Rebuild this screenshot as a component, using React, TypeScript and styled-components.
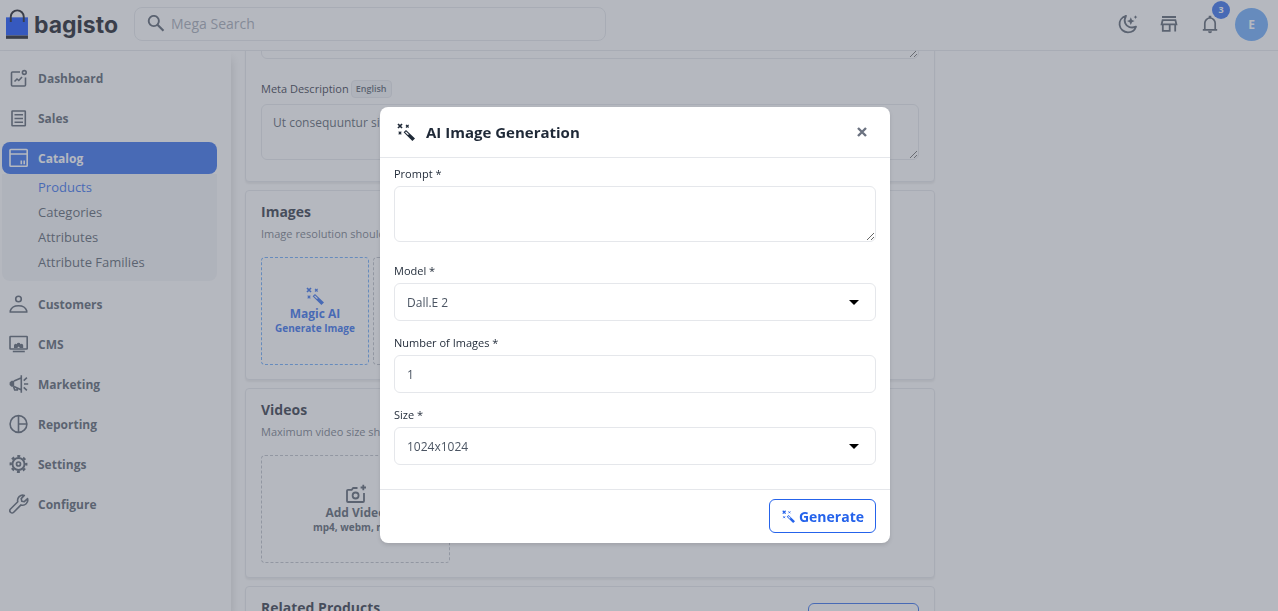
import React, { useLayoutEffect, useRef } from "react";
import styled, { createGlobalStyle } from "styled-components";

const GlobalStyle = createGlobalStyle`
  *, *::before, *::after { box-sizing: border-box; }
  body {
    margin: 0;
    background: #fff;
    color: #1f2937;
    font-family: "Open Sans", "Noto Sans", sans-serif;
    font-size: 13px;
  }
  button, input, textarea, select { font-family: inherit; }
  p, h1, h2 { margin: 0; }
  a { text-decoration: none; }
`;

/* ---------- icons ---------- */

const Svg = styled.svg<{ $size?: number }>`
  display: block;
  flex: none;
  width: ${(p) => p.$size ?? 20}px;
  height: ${(p) => p.$size ?? 20}px;
  fill: none;
  stroke: currentColor;
  stroke-width: 1.6;
`;

const MagicIcon = ({ size = 18 }: { size?: number }) => (
  <Svg $size={size} viewBox="0 0 18 18" aria-hidden="true">
    <path d="M1 1l4 4M5 1L1 5" strokeWidth="1.7" />
    <path d="M9 1.9l2.6 2.6M11.6 1.9L9 4.500M1.700 8.700l2.600 2.600M4.300 8.700L1.700 11.300" strokeWidth="1.2" />
    <path d="M9 6.900L6.600 9.300l8.800 8.700L18 15.500zM9 8.400l2.900 2.800-.9.900-2.900-2.900z" fill="currentColor" fillRule="evenodd" stroke="none" />
  </Svg>
);

const DashboardIcon = () => (
  <Svg viewBox="0 0 20 20">
    <path d="M11 4H3.500a1 1 0 0 0-1 1v12a1 1 0 0 0 1 1H15.500a1 1 0 0 0 1-1V9.500" />
    <circle cx="15.300" cy="4.500" r="1.900" />
    <path d="M5.500 13.500l2.500-2.500 1.800 1.500 3.200-3.500" />
  </Svg>
);
const SalesIcon = () => (
  <Svg viewBox="0 0 20 20">
    <rect x="3" y="3" width="13.300" height="14.800" rx=".5" />
    <path d="M5.500 6.800h8.500M5.500 10.500h8.500M5.500 14.200h8.500" />
  </Svg>
);
const CatalogIcon = () => (
  <Svg viewBox="0 0 20 20">
    <rect x="1" y="1.500" width="17.200" height="16.800" rx=".8" />
    <path d="M1 6h17.200M12.300 12.500v3.800M15.200 12.500v3.800" />
  </Svg>
);
const CustomersIcon = () => (
  <Svg viewBox="0 0 20 20">
    <circle cx="9.500" cy="5" r="2.800" />
    <path d="M1.300 18v-1.200c1-3.200 4.200-5 8.200-5s7.200 1.800 8.200 5V18z" />
  </Svg>
);
const CmsIcon = () => (
  <Svg viewBox="0 0 20 20">
    <rect x="1" y="2.500" width="17.200" height="12.500" rx=".5" />
    <path d="M3.800 17.500h12" />
    <path d="M5 14v-2.500a1.600 1.600 0 0 1 2.700-1.300 2 2 0 0 1 3.800 0A1.600 1.600 0 0 1 14.200 11.500V14h-3.200l-1.400-1.500L8.200 14z" fill="currentColor" stroke="none" />
  </Svg>
);
const MarketingIcon = () => (
  <Svg viewBox="0 0 20 20">
    <path d="M12.300 1.300v17.400M12 4L5 7M5 12.600l7 3.200" />
    <path d="M5.200 6.800v6H2.500L.6 11V8.500L2.500 6.800z" fill="currentColor" stroke="none" />
    <path d="M4.500 12.600l1.200 3.400h2.600v-2M14.700 6.700l3.200-3M15 10h4.200M14.700 13.300l3.200 3" />
  </Svg>
);
const ReportingIcon = () => (
  <Svg viewBox="0 0 20 20">
    <circle cx="9.500" cy="10" r="8.400" />
    <path d="M9.500 1.600v16.800M9.500 10h8.400" />
  </Svg>
);
const SettingsIcon = () => (
  <Svg viewBox="0 0 20 20">
    <circle cx="9.500" cy="10" r="6" strokeWidth="1.900" />
    <circle cx="9.500" cy="10" r="2" strokeWidth="1.700" />
    <circle cx="9.500" cy="10" r="7.800" strokeWidth="2.300" strokeDasharray="3 3.126" strokeDashoffset="1.500" />
  </Svg>
);
const ConfigureIcon = () => (
  <Svg viewBox="0 0 20 20">
    <path d="M15.300 1.400a5.200 5.200 0 0 0-6.500 6.400L1.500 15a2.200 2.200 0 0 0 3.200 3.200l7.300-7.300a5.200 5.200 0 0 0 6.600-6.300l-3.300 3.100-2.500-.5-.6-2.600z" strokeLinejoin="round" />
  </Svg>
);
const SearchIcon = () => (
  <Svg $size={18} viewBox="0 0 18 18">
    <circle cx="6.800" cy="6" r="5.100" strokeWidth="1.900" />
    <path d="M10.500 9.800l6 6" strokeWidth="2.200" />
  </Svg>
);
const MoonIcon = () => (
  <Svg viewBox="0 0 20 20">
    <path d="M8 1.800C3.500 3.100 1.100 7 1.600 11c.6 4.400 4.200 7.300 8.300 7.300 3.700 0 6.900-2.100 8.100-5.600-4.800 1.900-9.200.3-10.700-3.300C6.200 6.800 6.700 4.200 8 1.800z" strokeLinejoin="round" strokeWidth="1.800" />
    <path d="M12.800 3.300l1.200 2.600 2.600 1.200L14 8.300l-1.200 2.600-1.200-2.600L9 7.100l2.600-1.200zM17.500 1.200l.6 1.300 1.300.6-1.300.6-.6 1.300-.6-1.300-1.300-.6 1.300-.6z" fill="currentColor" stroke="none" />
  </Svg>
);
const StoreIcon = () => (
  <Svg viewBox="0 0 20 20" strokeWidth="1.800">
    <path d="M3 3h14M3.600 6.200h12.800l1 4.200H2.600zM3.800 10.300v6.500h6.900v-6.500M16.200 10.300v7.200" strokeWidth="1.800" />
  </Svg>
);
const BellIcon = () => (
  <Svg viewBox="0 0 20 20">
    <path d="M2.800 15.800h14.400M4.800 15.500V9.200a5.200 5.200 0 0 1 10.400 0v6.300" strokeWidth="1.700" />
    <path d="M8.700 1.800h2.600V4H8.700zM8 17.300h4a2 2 0 0 1-4 0z" fill="currentColor" stroke="none" />
  </Svg>
);
const CameraIcon = () => (
  <Svg viewBox="0 0 20 20">
    <path d="M11.500 4H7.200L5.700 5.800H2a1 1 0 0 0-1 1V17a1 1 0 0 0 1 1h15a1 1 0 0 0 1-1V9" strokeWidth="1.800" />
    <circle cx="9.600" cy="11.500" r="3" strokeWidth="1.800" />
    <path d="M17.300.8v5.400M14.600 3.500H20" strokeWidth="1.800" />
  </Svg>
);
const CloseIcon = () => (
  <Svg $size={10} viewBox="0 0 10 10">
    <path d="M1 1l8 8M9 1L1 9" strokeWidth="2.400" />
  </Svg>
);

const BagMark = styled.svg`
  display: block;
  width: 23px;
  height: 31px;
`;

/* ---------- page shell ---------- */

const Page = styled.div`
  display: flex;
  flex-direction: column;
  height: 100vh;
  overflow: hidden;
`;

const Header = styled.header`
  display: flex;
  align-items: center;
  justify-content: space-between;
  flex: none;
  height: 51px;
  padding: 0 10px 2px 6px;
  border-bottom: 1px solid #e5e7eb;
`;

const HeaderGroup = styled.div<{ $gap: number }>`
  display: flex;
  align-items: center;
  gap: ${(p) => p.$gap}px;
`;

const Logo = styled.a`
  display: flex;
  align-items: center;
  gap: 6px;
  width: 112px;
  color: #080b14;
  font: 700 23px/31px Inter, sans-serif;
`;

const LogoText = styled.span`
  padding-top: 3px;
`;

const SearchBox = styled.label`
  display: flex;
  align-items: center;
  gap: 6px;
  width: 472px;
  height: 34px;
  padding: 0 12px;
  border: 1px solid #e5e7eb;
  border-radius: 8px;
  color: #4b5563;
`;

const SearchInput = styled.input`
  flex: 1;
  min-width: 0;
  padding: 0;
  border: 0;
  outline: 0;
  background: none;
  font-size: 14px;
  line-height: 20px;
  color: #4b5563;
  &::placeholder { color: #9ca3af; opacity: 1; }
`;

const IconButton = styled.button`
  position: relative;
  display: flex;
  padding: 0;
  border: 0;
  background: none;
  color: #4b5563;
`;

const Count = styled.span`
  position: absolute;
  top: -13px;
  left: 12px;
  width: 18px;
  height: 18px;
  border-radius: 9px;
  background: #2563eb;
  color: #fff;
  font-size: 9px;
  font-weight: 700;
  line-height: 18px;
  text-align: center;
`;

const Avatar = styled.button`
  width: 33px;
  height: 33px;
  margin-left: -6px;
  padding: 0;
  border: 0;
  border-radius: 50%;
  background: #60a5fa;
  color: #fff;
  font-size: 12px;
  font-weight: 700;
`;

const Body = styled.div`
  display: flex;
  flex: 1;
  min-height: 0;
`;

const Sidebar = styled.nav`
  display: flex;
  flex-direction: column;
  gap: 7px;
  flex: none;
  width: 231px;
  padding: 11px 14px 0 2px;
  box-shadow: 0 8px 10px 0 rgba(0, 0, 0, 0.2);
`;

const NavGroup = styled.div`
  display: flex;
  flex-direction: column;
  gap: 8px;
`;

const NavItem = styled.a<{ $active?: boolean }>`
  display: flex;
  align-items: center;
  gap: 9px;
  height: 32px;
  padding-left: 7px;
  border-radius: 8px;
  background: ${(p) => (p.$active ? "#2563eb" : "none")};
  color: ${(p) => (p.$active ? "#fff" : "#4b5563")};
  font-size: 12px;
  font-weight: 700;
`;

const SubMenu = styled.div`
  display: flex;
  flex-direction: column;
  margin-top: -8px;
  padding: 1px 0 6px 36px;
  border-radius: 0 0 8px 8px;
  background: #f3f4f6;
`;

const SubLink = styled.a<{ $active?: boolean }>`
  color: ${(p) => (p.$active ? "#2563eb" : "#4b5563")};
  font-size: 13px;
  line-height: 25px;
`;

const Main = styled.main`
  flex: 1;
  min-width: 0;
  overflow-y: auto;
  scrollbar-width: none;
  padding: 11px 16px 120px 14px;
  display: grid;
  grid-template-columns: minmax(0, 1fr) 317px;
  gap: 10px;
  align-items: start;
`;

const Cards = styled.div`
  display: grid;
  gap: 8px;
`;

/* ---------- cards ---------- */

const Card = styled.section`
  padding: 11px 15px 14px;
  border: 1px solid #e5e7eb;
  border-radius: 4px;
  background: #fff;
  box-shadow: 0 2px 2px rgba(0, 0, 0, 0.08);
`;

const MetaCard = styled(Card)`
  padding-bottom: 21px;
`;

const CardHead = styled.div`
  display: flex;
  align-items: flex-start;
  justify-content: space-between;
`;

const CardTitle = styled.h2`
  font-size: 14px;
  font-weight: 700;
  line-height: 20px;
`;

const CardNote = styled.p`
  margin: 4px 0 15px;
  color: #6b7280;
  font-size: 11px;
  font-weight: 500;
  line-height: 16px;
`;

const LabelRow = styled.div`
  display: flex;
  align-items: center;
  gap: 2px;
  height: 18px;
  margin: 21px 0 6px;
`;

const Badge = styled.span`
  height: 18px;
  padding: 0 4px;
  border: 1px solid #e5e7eb;
  border-radius: 4px;
  background: #f3f4f6;
  color: #4b5563;
  font-size: 9px;
  font-weight: 600;
  line-height: 15px;
`;

const Label = styled.label`
  display: block;
  color: #1f2937;
  font-size: 11px;
  font-weight: 500;
  line-height: 16px;
`;

const TextArea = styled.textarea`
  display: block;
  width: 100%;
  height: 56px;
  padding: 8px 11px;
  border: 1px solid #e5e7eb;
  border-radius: 6px;
  outline: 0;
  background: #fff;
  color: #4b5563;
  font-size: 12px;
  line-height: 20px;
  resize: vertical;
`;

const Tiles = styled.div`
  display: flex;
  gap: 4px;
`;

const Tile = styled.button<{ $wide?: boolean; $accent?: boolean }>`
  display: flex;
  flex-direction: column;
  align-items: center;
  justify-content: center;
  width: ${(p) => (p.$wide ? 189 : 108)}px;
  height: 108px;
  padding: 0;
  border: 1px dashed ${(p) => (p.$accent ? "#60a5fa" : "#b8bcc4")};
  border-radius: 4px;
  background: none;
  color: ${(p) => (p.$accent ? "#2563eb" : "#4b5563")};
`;

const TileTitle = styled.span`
  font-size: 12px;
  font-weight: 700;
  line-height: 17px;
`;

const TileNote = styled.span`
  font-size: 10px;
  font-weight: 700;
  line-height: 13px;
`;

const OutlineButton = styled.button`
  display: flex;
  align-items: center;
  justify-content: center;
  gap: 4px;
  height: 34px;
  padding: 0 11px 0 12px;
  border: 1px solid #2563eb;
  border-radius: 6px;
  background: #fff;
  color: #2563eb;
  font-size: 14px;
  font-weight: 700;
`;

const RelatedHead = styled(CardHead)`
  & > button { margin-top: 5px; }
`;

/* ---------- dialog ---------- */

const Overlay = styled.div`
  position: fixed;
  inset: 0;
  display: flex;
  align-items: center;
  justify-content: center;
  padding: 39px 8px 0 0;
  background: rgba(107, 114, 128, 0.5);
`;

const Dialog = styled.form`
  width: 510px;
  border-radius: 8px;
  background: #fff;
  box-shadow: 0 2px 4px rgba(0, 0, 0, 0.12);
`;

const DialogHead = styled.div`
  display: flex;
  align-items: center;
  justify-content: space-between;
  height: 51px;
  padding: 0 23px 0 17px;
  border-bottom: 1px solid #e5e7eb;
`;

const DialogTitle = styled.h1`
  display: flex;
  align-items: center;
  gap: 11px;
  font-size: 15px;
  font-weight: 700;
`;

const CloseButton = styled(IconButton)`
  color: #6b7280;
`;

const DialogBody = styled.div`
  display: flex;
  flex-direction: column;
  gap: 14px;
  padding: 8px 14px 24px;
`;

const Field = styled.div<{ $tall?: boolean }>`
  display: flex;
  flex-direction: column;
  gap: 4px;
  padding-bottom: ${(p) => (p.$tall ? 7 : 0)}px;
`;

const TextInput = styled.input`
  width: 100%;
  height: 38px;
  padding: 0 12px;
  border: 1px solid #e5e7eb;
  border-radius: 6px;
  outline: 0;
  background: #fff;
  color: #4b5563;
  font-size: 12px;
`;

const SelectWrap = styled.div`
  display: grid;
  align-items: center;
  & > * { grid-area: 1 / 1; }
  & > svg { justify-self: end; margin-right: 17px; pointer-events: none; }
`;

const Select = styled(TextInput).attrs({ as: "select" })`
  appearance: none;
`;

const Caret = styled.svg`
  width: 10px;
  height: 5px;
  fill: #000;
`;

const DialogFoot = styled.div`
  display: flex;
  justify-content: flex-end;
  padding: 9px 14px 10px;
  border-top: 1px solid #e5e7eb;
`;

const topNav = [
  { label: "Dashboard", Icon: DashboardIcon },
  { label: "Sales", Icon: SalesIcon },
  { label: "Catalog", Icon: CatalogIcon, active: true },
];
const subNav = ["Products", "Categories", "Attributes", "Attribute Families"];
const bottomNav = [
  { label: "Customers", Icon: CustomersIcon },
  { label: "CMS", Icon: CmsIcon },
  { label: "Marketing", Icon: MarketingIcon },
  { label: "Reporting", Icon: ReportingIcon },
  { label: "Settings", Icon: SettingsIcon },
  { label: "Configure", Icon: ConfigureIcon },
];

const SelectField = ({ id, label, value }: { id: string; label: string; value: string }) => (
  <Field>
    <Label htmlFor={id}>{label}</Label>
    <SelectWrap>
      <Select id={id}>
        <option>{value}</option>
      </Select>
      <Caret viewBox="0 0 10 5"><path d="M0 0h10L5 5z" /></Caret>
    </SelectWrap>
  </Field>
);

export default function App() {
  const mainRef = useRef<HTMLElement>(null);

  // Open the page scrolled down to the meta description.
  useLayoutEffect(() => {
    if (mainRef.current) mainRef.current.scrollTop = 71;
  }, []);

  return (
    <>
      <GlobalStyle />
      <Page>
        <Header>
          <HeaderGroup $gap={16}>
            <Logo href="#">
              <BagMark viewBox="0 0 23 31">
                <path d="M0 8h23v19H0z" fill="#0041ff" />
                <path d="M0 27h23v3.500H0z" fill="#080b14" />
                <path d="M5 13V7.500a6.800 6.800 0 0 1 13.600 0V13" fill="none" stroke="#080b14" strokeWidth="2" />
              </BagMark>
              <LogoText>bagisto</LogoText>
            </Logo>
            <SearchBox>
              <SearchIcon />
              <SearchInput type="text" placeholder="Mega Search" aria-label="Mega Search" />
            </SearchBox>
          </HeaderGroup>
          <HeaderGroup $gap={21}>
            <IconButton aria-label="Dark mode"><MoonIcon /></IconButton>
            <IconButton aria-label="Visit shop"><StoreIcon /></IconButton>
            <IconButton aria-label="Notifications"><BellIcon /><Count>3</Count></IconButton>
            <Avatar>E</Avatar>
          </HeaderGroup>
        </Header>

        <Body>
          <Sidebar>
            <NavGroup>
              {topNav.map(({ label, Icon, active }) => (
                <NavItem key={label} href="#" $active={active}><Icon />{label}</NavItem>
              ))}
              <SubMenu>
                {subNav.map((label, i) => (
                  <SubLink key={label} href="#" $active={i === 0}>{label}</SubLink>
                ))}
              </SubMenu>
            </NavGroup>
            <NavGroup>
              {bottomNav.map(({ label, Icon }) => (
                <NavItem key={label} href="#"><Icon />{label}</NavItem>
              ))}
            </NavGroup>
          </Sidebar>

          <Main ref={mainRef}>
            <Cards>
              <MetaCard>
                <TextArea aria-label="Meta Keywords" />
                <LabelRow>
                  <Label htmlFor="description">Meta Description</Label><Badge>English</Badge>
                </LabelRow>
                <TextArea id="description" defaultValue="Ut consequuntur sit" />
              </MetaCard>

              <Card>
                <CardHead><CardTitle>Images</CardTitle></CardHead>
                <CardNote>Image resolution should be like 560px X 609px</CardNote>
                <Tiles>
                  <Tile $accent type="button">
                    <MagicIcon />
                    <TileTitle>Magic AI</TileTitle>
                    <TileNote>Generate Image</TileNote>
                  </Tile>
                  <Tile type="button">
                    <CameraIcon />
                    <TileTitle>Add Image</TileTitle>
                    <TileNote>png, jpeg, jpg</TileNote>
                  </Tile>
                </Tiles>
              </Card>

              <Card>
                <CardHead><CardTitle>Videos</CardTitle></CardHead>
                <CardNote>Maximum video size should be like 2M</CardNote>
                <Tiles>
                  <Tile $wide type="button">
                    <CameraIcon />
                    <TileTitle>Add Video</TileTitle>
                    <TileNote>mp4, webm, mkv</TileNote>
                  </Tile>
                </Tiles>
              </Card>

              <Card>
                <RelatedHead>
                  <CardTitle>Related Products</CardTitle>
                  <OutlineButton type="button">Add Product</OutlineButton>
                </RelatedHead>
              </Card>
            </Cards>
          </Main>
        </Body>
      </Page>

      <Overlay>
        <Dialog role="dialog" aria-modal="true" aria-labelledby="dialog-title" onSubmit={(e: React.FormEvent) => e.preventDefault()}>
          <DialogHead>
            <DialogTitle id="dialog-title"><MagicIcon />AI Image Generation</DialogTitle>
            <CloseButton type="button" aria-label="Close"><CloseIcon /></CloseButton>
          </DialogHead>
          <DialogBody>
            <Field $tall>
              <Label htmlFor="prompt">Prompt *</Label>
              <TextArea id="prompt" />
            </Field>
            <SelectField id="model" label="Model *" value="Dall.E 2" />
            <Field>
              <Label htmlFor="count">Number of Images *</Label>
              <TextInput id="count" type="text" defaultValue="1" />
            </Field>
            <SelectField id="size" label="Size *" value="1024x1024" />
          </DialogBody>
          <DialogFoot>
            <OutlineButton type="submit"><MagicIcon size={13} />Generate</OutlineButton>
          </DialogFoot>
        </Dialog>
      </Overlay>
    </>
  );
}
